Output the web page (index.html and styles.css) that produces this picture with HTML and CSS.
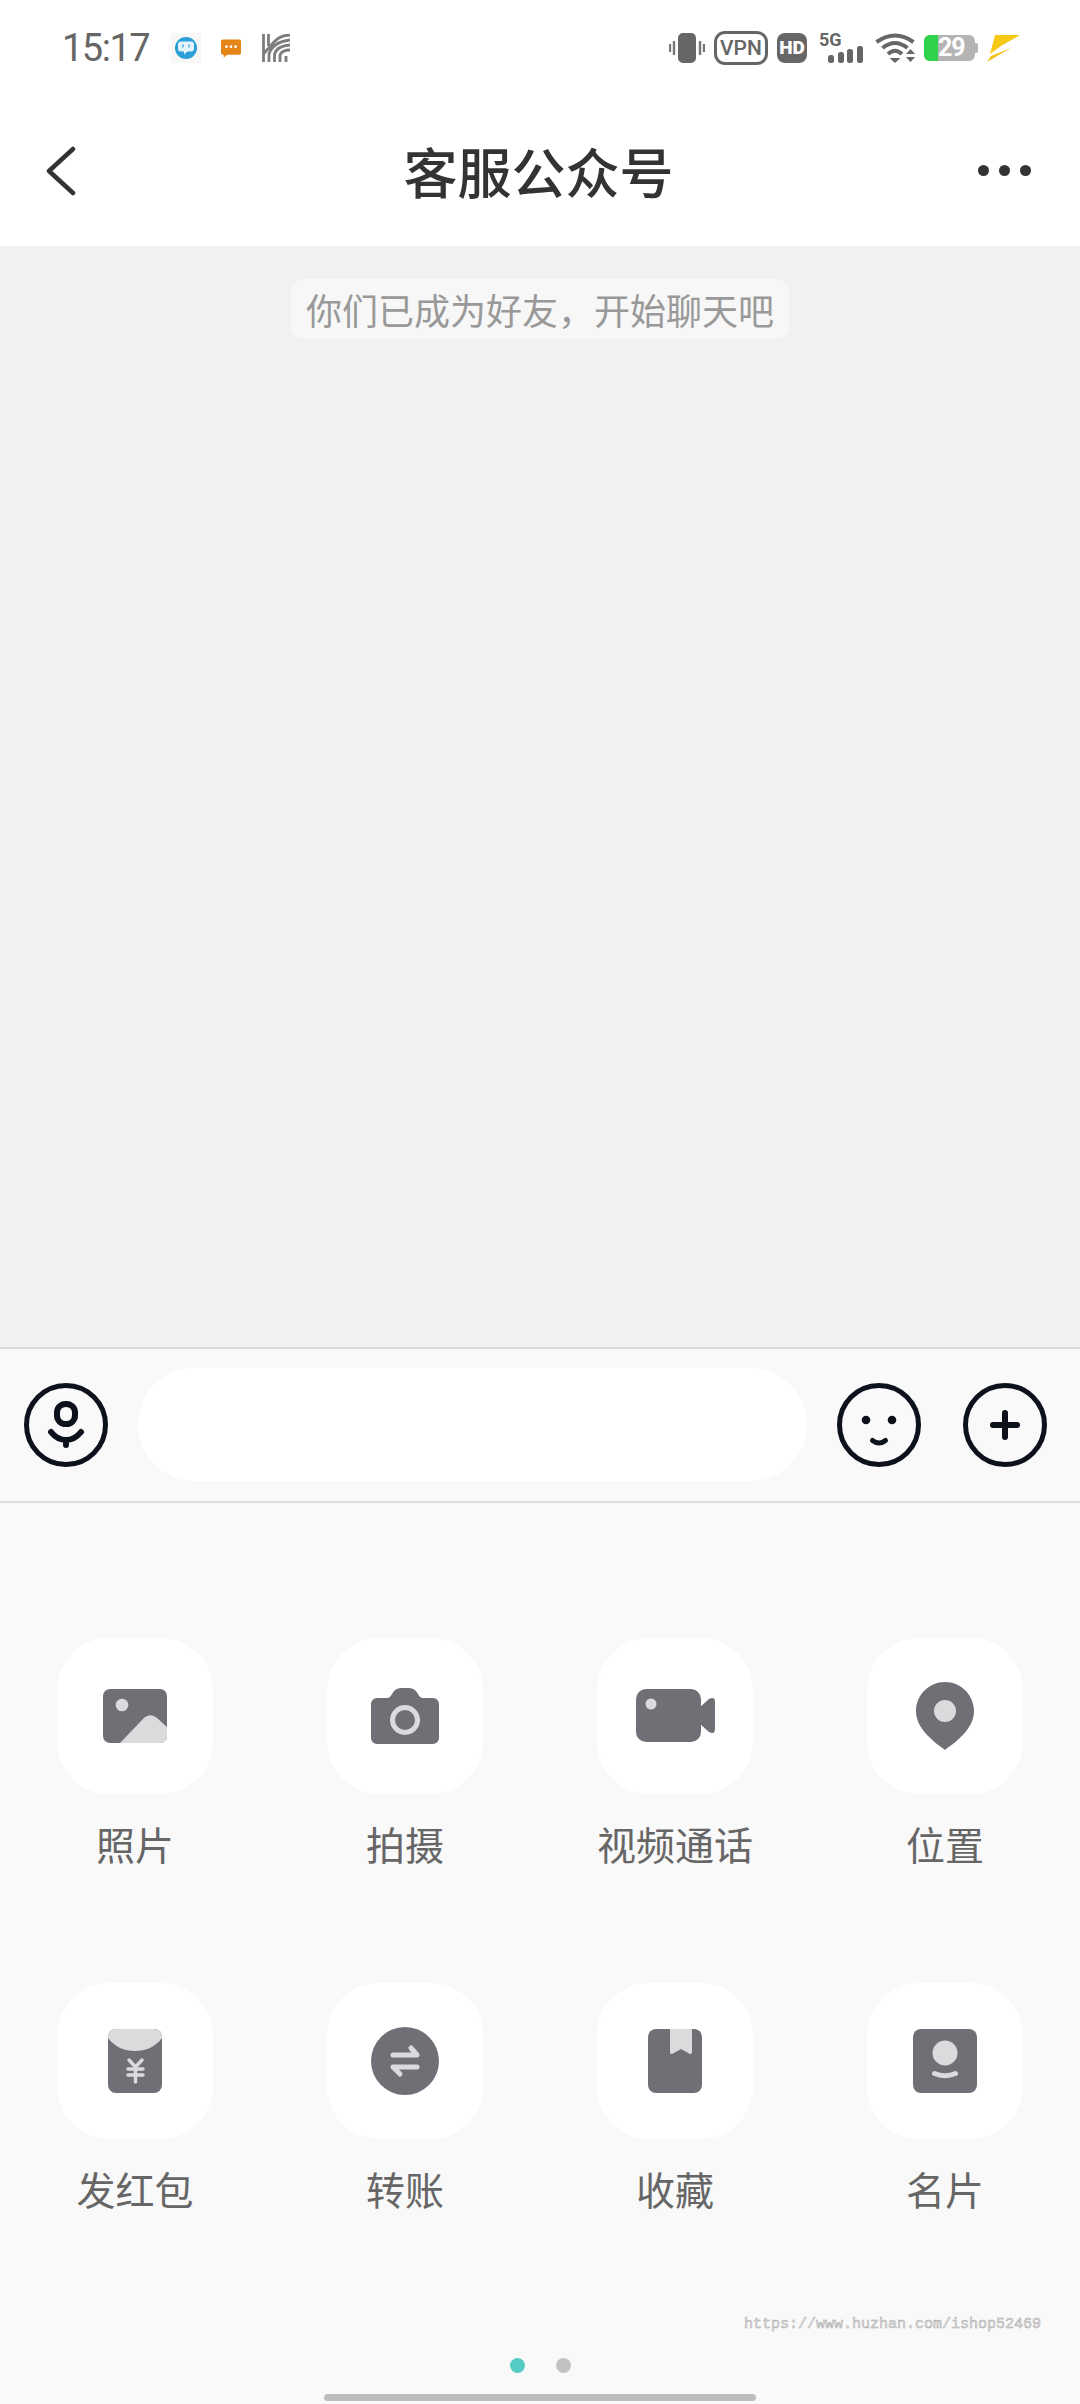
FILE: index.html
```html
<!DOCTYPE html>
<html lang="zh-CN">
<head>
<meta charset="UTF-8">
<meta name="viewport" content="width=device-width, initial-scale=1.0">
<title>客服公众号</title>
<link rel="stylesheet" href="styles.css">
</head>
<body>

<div class="screen">
    <div class="status-bar">
        <div class="status-left">
            <span class="clock">15:17</span>
            <svg class="notify notify-blue" viewBox="0 0 30 30"><rect width="30" height="30" fill="#f7f7f7"/><circle cx="15" cy="15" r="11" fill="#2a9fd8"/><path d="M10 8.500h10a3 3 0 0 1 3 3v4a3 3 0 0 1-3 3h-3.500l-3.500 3v-3h-3a3 3 0 0 1-3-3v-4a3 3 0 0 1 3-3z" fill="#e4f4fb"/><path d="M12 11.500v3M18 11.500v3" stroke="#2a9fd8" stroke-width="1.200"/></svg>
            <svg class="notify notify-orange" viewBox="0 0 22 20"><path d="M2 0h18a2 2 0 0 1 2 2v13a2 2 0 0 1-2 2H7l-4 3v-3H2a2 2 0 0 1-2-2V2a2 2 0 0 1 2-2z" fill="#e58417"/><circle cx="6" cy="8" r="1.500" fill="#fff"/><circle cx="11" cy="8" r="1.500" fill="#fff"/><circle cx="16" cy="8" r="1.500" fill="#fff"/></svg>
            <svg class="notify notify-print" viewBox="0 0 28 28" fill="none" stroke="#7d7d7d" stroke-width="2.800"><path d="M1.500 0v28M6.500 0v12M1.500 20L12 8Q18 1 28 1M7 28V20Q11 8 28 6M12.500 28V20Q15 12 28 11M18 28V21Q20 16 28 16M24 28V22"/></svg>
        </div>
        <div class="status-right">
            <svg class="st-vibrate" viewBox="0 0 36 30"><rect x="9" y="0" width="18" height="30" rx="5" fill="#666"/><path d="M1 11v8M5 8v14M31 8v14M35 11v8" stroke="#777" stroke-width="2.400" fill="none"/></svg>
            <span class="st-vpn">VPN</span>
            <span class="st-hd">HD</span>
            <span class="st-net">
                <span class="st-5g">5G</span>
                <svg class="st-bars" viewBox="0 0 35 17"><rect x="0" y="9" width="6" height="8" rx="2.500" fill="#666"/><rect x="10" y="6" width="6" height="11" rx="2.500" fill="#666"/><rect x="19" y="3" width="6" height="14" rx="2.500" fill="#666"/><rect x="29" y="0" width="6" height="17" rx="2.500" fill="#666"/></svg>
            </span>
            <svg class="st-wifi" viewBox="0 0 40 30" fill="none" stroke="#666" stroke-width="4"><path d="M1.500 9Q20 -4 38.500 9M7.500 15Q20 5 32.500 15M13 21Q20 14.500 27 21"/><path d="M14.500 25h11L20 30z" fill="#666" stroke="none"/><path d="M31 21l4.500-5 4.500 5zM31 24h9l-4.500 5z" fill="#666" stroke="none"/></svg>
            <span class="st-battery">
                <span class="st-battery-body"><span class="st-battery-fill"></span><span class="st-battery-num">29</span></span>
                <span class="st-battery-cap"></span>
            </span>
            <svg class="st-bolt" viewBox="0 0 33 27"><path d="M8 0h25L14 11 3 19z" fill="#f5c916"/><path d="M4 21l20-8L0 27z" fill="#f2c21a"/></svg>
        </div>
    </div>

    <div class="nav-bar">
        <svg class="nav-back" viewBox="0 0 30 50" fill="none" stroke="#333" stroke-width="4.500" stroke-linecap="round" stroke-linejoin="round"><path d="M27 3L3 25l24 22"/></svg>
        <h1 class="nav-title">客服公众号</h1>
        <div class="nav-more"><span></span><span></span><span></span></div>
    </div>

    <div class="chat">
        <div class="notice">你们已成为好友&#xFF0C;开始聊天吧</div>
    </div>

    <div class="input-bar">
        <svg class="round-btn" viewBox="0 0 84 84" fill="none" stroke="#0d111c" stroke-width="5" stroke-linecap="round"><circle cx="42" cy="42" r="39.500"/><rect x="33" y="21" width="18" height="20" rx="8.500" stroke-width="6"/><path d="M27 49c4 5 9 8 15 8s11-3 15-8M42 57v5" stroke-width="6"/></svg>
        <div class="text-field"></div>
        <svg class="round-btn btn-emoji" viewBox="0 0 84 84" fill="none" stroke="#0d111c" stroke-width="5" stroke-linecap="round"><circle cx="42" cy="42" r="39.500"/><circle cx="29" cy="37" r="4.300" fill="#0d111c" stroke="none"/><circle cx="55" cy="37" r="4.300" fill="#0d111c" stroke="none"/><path d="M35.500 57.500Q42 62.500 48.500 57.500"/></svg>
        <svg class="round-btn btn-plus" viewBox="0 0 84 84" fill="none" stroke="#0d111c" stroke-width="5" stroke-linecap="round"><circle cx="42" cy="42" r="39.500"/><path d="M30 42h24M42 30v24" stroke-width="6"/></svg>
    </div>

    <div class="panel">
        <div class="grid">
            <div class="item">
                <div class="tile"><svg viewBox="0 0 80 80"><rect x="8" y="13" width="64" height="54" rx="7" fill="#6e7076"/><circle cx="27" cy="29" r="6.300" fill="#dbdbdd"/><path d="M25 67l23-24q7-7 14-1l10 9v9a7 7 0 0 1-7 7z" fill="#dbdbdd"/></svg></div>
                <span class="label">照片</span>
            </div>
            <div class="item">
                <div class="tile"><svg viewBox="0 0 80 80"><path d="M12 22h10q3 0 5-4 3-6 9-6h8q6 0 9 6 2 4 5 4h10a6 6 0 0 1 6 6v34a6 6 0 0 1-6 6H12a6 6 0 0 1-6-6V28a6 6 0 0 1 6-6z" fill="#6e7076"/><circle cx="40" cy="44" r="12.500" fill="none" stroke="#dbdbdd" stroke-width="5"/></svg></div>
                <span class="label">拍摄</span>
            </div>
            <div class="item">
                <div class="tile"><svg viewBox="0 0 80 80"><rect x="1" y="13" width="65" height="53" rx="10" fill="#6e7076"/><path d="M64 32l10-9q6-3 6 3v27q0 6-6 3l-10-9z" fill="#6e7076"/><circle cx="16" cy="28" r="5.500" fill="#dbdbdd"/></svg></div>
                <span class="label">视频通话</span>
            </div>
            <div class="item">
                <div class="tile"><svg viewBox="0 0 80 80"><path d="M40 6c16 0 29 13 29 29 0 19-20 32-29 39-9-7-29-20-29-39C11 19 24 6 40 6z" fill="#6e7076"/><circle cx="40" cy="35" r="11" fill="#dbdbdd"/></svg></div>
                <span class="label">位置</span>
            </div>
            <div class="item">
                <div class="tile"><svg viewBox="0 0 80 80"><rect x="13" y="8" width="54" height="64" rx="8" fill="#6e7076"/><path d="M13 17v-1a8 8 0 0 1 8-8h38a8 8 0 0 1 8 8v1c-7 9-16 13-27 13s-20-4-27-13z" fill="#dbdbdd"/><path d="M34 39l6.500 7 6.500-7M33 48h15M33 54h15M40.500 46v15" fill="none" stroke="#dbdbdd" stroke-width="3.500" stroke-linecap="round"/></svg></div>
                <span class="label">发红包</span>
            </div>
            <div class="item">
                <div class="tile"><svg viewBox="0 0 80 80"><circle cx="40" cy="40" r="34" fill="#6e7076"/><path d="M28 34h24l-6-7M52 46H28l7 7" fill="none" stroke="#dbdbdd" stroke-width="5" stroke-linecap="round" stroke-linejoin="round"/></svg></div>
                <span class="label">转账</span>
            </div>
            <div class="item">
                <div class="tile"><svg viewBox="0 0 80 80"><rect x="13" y="8" width="54" height="64" rx="8" fill="#6e7076"/><path d="M35 8h22v23q0 3-3 1.500l-8-4.500-8 4.500q-3 1.500-3-1.500z" fill="#dbdbdd"/></svg></div>
                <span class="label">收藏</span>
            </div>
            <div class="item">
                <div class="tile"><svg viewBox="0 0 80 80"><rect x="8" y="8" width="64" height="64" rx="8" fill="#6e7076"/><circle cx="40" cy="32" r="12.500" fill="#dbdbdd"/><path d="M29.500 52.500q10.500 4.500 21 0" fill="none" stroke="#dbdbdd" stroke-width="5" stroke-linecap="round"/></svg></div>
                <span class="label">名片</span>
            </div>
        </div>

        <div class="watermark">https://www.huzhan.com/ishop52469</div>
        <div class="dots"><span class="dot dot-on"></span><span class="dot"></span></div>
        <div class="home-bar"></div>
    </div>
</div>

</body>
</html>
```
FILE: styles.css
```css
* {
    box-sizing: border-box;
}
html, body {
    margin: 0;
    padding: 0;
}
body {
    font-family: "Noto Sans CJK SC", "Noto Sans", sans-serif;
    background-color: #f9f9f9;
}
.screen {
    width: 1080px;
    height: 2404px;
    display: flex;
    flex-direction: column;
    overflow: hidden;
}

/* status bar */
.status-bar {
    height: 96px;
    flex-shrink: 0;
    background-color: #fff;
    display: flex;
    justify-content: space-between;
    align-items: center;
    padding: 0 60px 0 62px;
}
.status-left, .status-right {
    display: flex;
    align-items: center;
}
.clock {
    font-family: Roboto, sans-serif;
    font-size: 38px;
    letter-spacing: -1.5px;
    color: #666;
    width: 109px;
    line-height: 48px;
}
.notify {
    display: block;
}
.notify-blue {
    width: 30px;
    height: 30px;
}
.notify-orange {
    width: 20px;
    height: 19px;
    margin-left: 20px;
}
.notify-print {
    width: 28px;
    height: 28px;
    margin-left: 21px;
}
.st-vibrate {
    width: 36px;
    height: 30px;
}
.st-vpn {
    width: 54px;
    height: 34px;
    margin-left: 9px;
    border: 3px solid #666;
    border-radius: 11px;
    font-family: Roboto, sans-serif;
    font-size: 21px;
    font-weight: 500;
    line-height: 28px;
    text-align: center;
    color: #666;
}
.st-hd {
    width: 30px;
    height: 30px;
    margin-left: 9px;
    border-radius: 8px;
    background-color: #666;
    font-family: Roboto, sans-serif;
    font-size: 19px;
    font-weight: 900;
    line-height: 30px;
    text-align: center;
    color: #fff;
}
.st-net {
    width: 44px;
    height: 30px;
    margin-left: 12px;
    display: flex;
    flex-direction: column;
    justify-content: space-between;
}
.st-5g {
    font-family: Roboto, sans-serif;
    font-size: 18px;
    font-weight: 700;
    line-height: 13px;
    color: #666;
}
.st-bars {
    align-self: flex-end;
    width: 35px;
    height: 17px;
}
.st-wifi {
    width: 40px;
    height: 30px;
    margin-left: 12px;
}
.st-battery {
    display: flex;
    align-items: center;
    margin-left: 9px;
}
.st-battery-body {
    width: 51px;
    height: 26px;
    border-radius: 6px;
    background-color: #b4b4b4;
    position: relative;
    display: block;
}
.st-battery-fill {
    position: absolute;
    left: 0;
    top: 0;
    bottom: 0;
    width: 14px;
    border-radius: 6px 0 0 6px;
    background-color: #2fd24b;
}
.st-battery-num {
    position: absolute;
    left: 14px;
    top: 0;
    font-family: Roboto, sans-serif;
    font-size: 25px;
    font-weight: 700;
    letter-spacing: -1px;
    line-height: 26px;
    color: #fff;
}
.st-battery-cap {
    width: 3px;
    height: 10px;
    border-radius: 0 2px 2px 0;
    background-color: #b4b4b4;
}
.st-bolt {
    width: 33px;
    height: 27px;
    margin-left: 9px;
}

/* nav */
.nav-bar {
    height: 150px;
    flex-shrink: 0;
    background-color: #fff;
    display: grid;
    grid-template-columns: 1fr auto 1fr;
    align-items: center;
    padding: 0 49px 0 46px;
}
.nav-back {
    width: 30px;
    height: 50px;
    display: block;
    margin-top: -1px;
}
.nav-title {
    margin: 0;
    font-size: 54px;
    font-weight: 500;
    line-height: 70px;
    color: #333;
    white-space: nowrap;
}
.nav-more {
    justify-self: end;
    display: flex;
    gap: 10px;
    margin-top: -2px;
}
.nav-more span {
    width: 11px;
    height: 11px;
    border-radius: 50%;
    background-color: #333;
}

/* chat */
.chat {
    height: 1103px;
    flex-shrink: 0;
    background-color: #f1f1f1;
    border-bottom: 2px solid #dcdcdc;
    padding-top: 33px;
    display: flex;
    flex-direction: column;
    align-items: center;
}
.notice {
    width: 498px;
    height: 60px;
    border-radius: 14px;
    background-color: #f7f7f7;
    font-size: 36px;
    line-height: 60px;
    text-align: center;
    color: #999;
    white-space: nowrap;
}

/* input bar */
.input-bar {
    height: 154px;
    flex-shrink: 0;
    background-color: #f9f9f9;
    border-bottom: 2px solid #dcdcdc;
    display: flex;
    align-items: center;
    padding: 0 0 1px 24px;
}
.round-btn {
    width: 84px;
    height: 84px;
    flex-shrink: 0;
    display: block;
}
.text-field {
    width: 669px;
    height: 113px;
    margin-left: 30px;
    border-radius: 57px;
    background-color: #fff;
}
.btn-emoji {
    margin-left: 30px;
}
.btn-plus {
    margin-left: 42px;
}

/* panel */
.panel {
    flex: 1;
    background-color: #f9f9f9;
    display: flex;
    flex-direction: column;
    align-items: center;
}
.grid {
    display: grid;
    grid-template-columns: repeat(4, 156px);
    column-gap: 114px;
    row-gap: 112px;
    margin-top: 135px;
}
.item {
    display: flex;
    flex-direction: column;
    align-items: center;
}
.tile {
    width: 156px;
    height: 156px;
    border-radius: 52px;
    background-color: #fff;
    display: flex;
    align-items: center;
    justify-content: center;
}
.tile svg {
    width: 80px;
    height: 80px;
    display: block;
}
.label {
    margin-top: 21px;
    font-size: 39px;
    line-height: 56px;
    color: #666;
    white-space: nowrap;
}
.watermark {
    align-self: flex-end;
    margin: 98px 39px 0 0;
    font-family: "Liberation Mono", monospace;
    font-size: 15px;
    line-height: 22px;
    color: #e4e4e4;
    -webkit-text-stroke: 0.5px #a8a8a8;
}
.dots {
    margin-top: 22px;
    display: flex;
    gap: 31px;
}
.dot {
    width: 15px;
    height: 15px;
    border-radius: 50%;
    background-color: #c2c2c2;
}
.dot-on {
    background-color: #55cbc5;
}
.home-bar {
    margin-top: 21px;
    width: 432px;
    height: 7px;
    border-radius: 4px;
    background-color: #bdbdbd;
}
```
